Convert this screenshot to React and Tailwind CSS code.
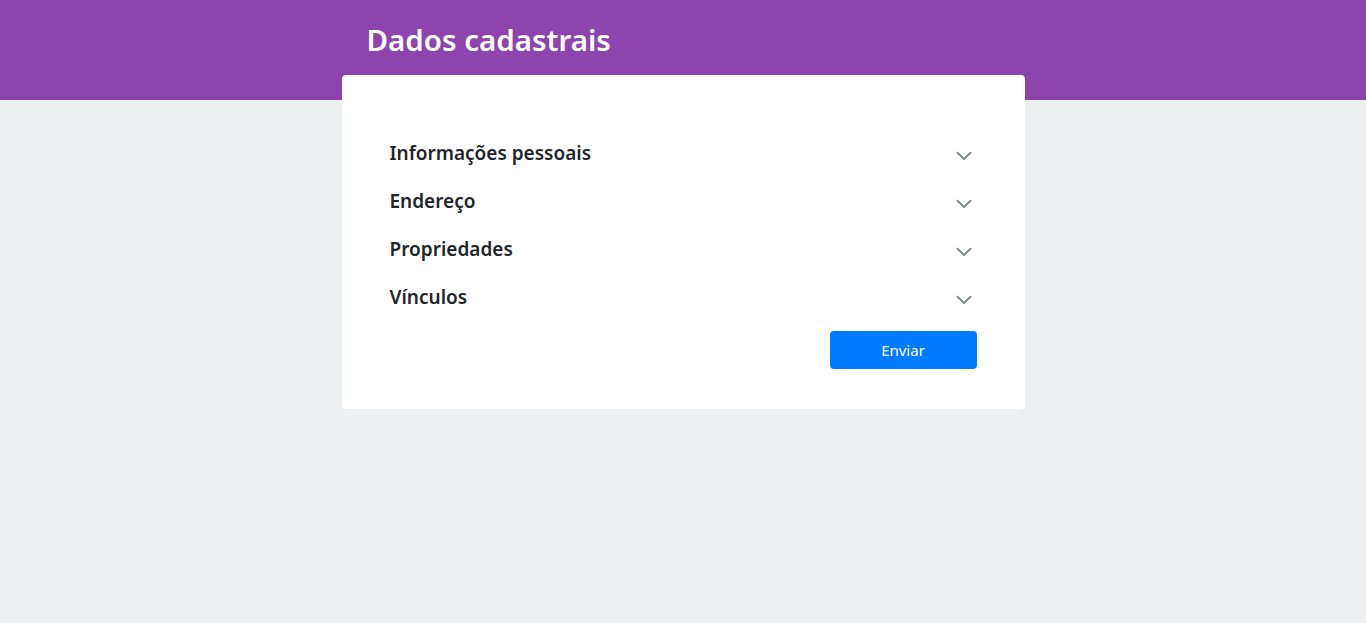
import { useState } from 'react'

// ── Icons ──────────────────────────────────────────────────────────────────────

const ChevronDown = () => (
  <svg width="16" height="10" viewBox="0 0 16 10" fill="none" aria-hidden="true">
    <path d="M1.5 1.8L8 8l6.5-6.2" stroke="#7f8c8d" strokeWidth="2" strokeLinecap="round" strokeLinejoin="round" />
  </svg>
)

const SECTIONS = ['Informações pessoais', 'Endereço', 'Propriedades', 'Vínculos']

function Section({ title }) {
  const [open, setOpen] = useState(false)
  return (
    <button
      type="button"
      onClick={() => setOpen((o) => !o)}
      className="flex h-12 w-full items-center justify-between text-left"
    >
      <span className="text-[19px] font-semibold text-[#212529] leading-none">{title}</span>
      <span className={`mr-[5px] mt-[6px] flex ${open ? 'rotate-180' : ''}`}>
        <ChevronDown />
      </span>
    </button>
  )
}

export default function App() {
  return (
    <div
      className="min-h-screen bg-[#ecf0f1]"
      style={{ fontFamily: '"Noto Sans", "Open Sans", sans-serif' }}
    >
      <header className="h-[100px] bg-[#8e44ad]">
        <div className="mx-auto w-[683px] pl-[25px] pt-[18px]">
          <h1 className="text-[29.5px] font-semibold leading-[44px] text-white">Dados cadastrais</h1>
        </div>
      </header>

      <main className="mx-auto -mt-[25px] w-[683px] rounded bg-white px-12 pb-10 pt-[54px]">
        <div className="flex flex-col">
          {SECTIONS.map((s) => (
            <Section key={s} title={s} />
          ))}
        </div>
        <div className="mt-[10px] flex justify-end">
          <button
            type="button"
            className="h-[38px] w-[147px] rounded bg-[#007bff] text-[15px] text-white"
          >
            Enviar
          </button>
        </div>
      </main>
    </div>
  )
}
